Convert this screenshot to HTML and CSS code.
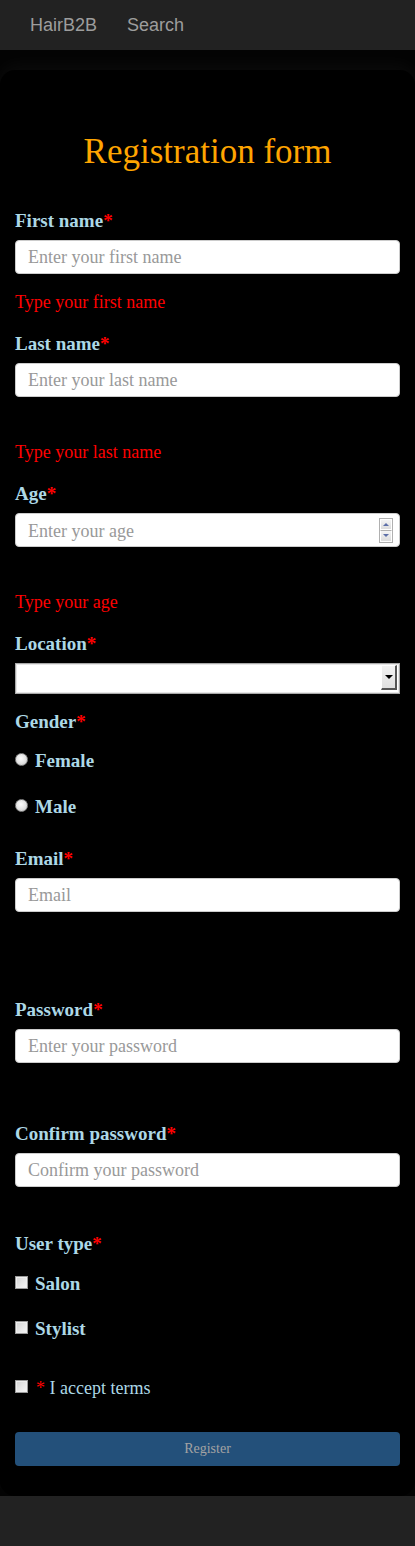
FILE: index.html
```html
<!DOCTYPE html>
<html lang="en">
<head>
<meta charset="utf-8">
<title>HairB2B - Registration</title>
<link rel="stylesheet" href="styles.css">
</head>
<body>
<nav class="navbar">
  <a class="brand" href="#">HairB2B</a>
  <a class="nav-link" href="#">Search</a>
</nav>
<main class="wrap">
  <form class="card">
    <h1 class="title">Registration form</h1>

    <div class="field f-first">
      <label class="lbl">First name<span class="req">*</span></label>
      <input class="ctl" type="text" placeholder="Enter your first name">
      <div class="err">Type your first name</div>
    </div>

    <div class="field f-std">
      <label class="lbl">Last name<span class="req">*</span></label>
      <input class="ctl" type="text" placeholder="Enter your last name">
      <div class="err err-far">Type your last name</div>
    </div>

    <div class="field f-std">
      <label class="lbl">Age<span class="req">*</span></label>
      <div class="numbox">
        <input class="num-input" type="text" placeholder="Enter your age">
        <div class="spin">
          <span class="spin-btn"><span class="tri-up"></span></span>
          <span class="spin-btn"><span class="tri-down"></span></span>
        </div>
      </div>
      <div class="err err-far">Type your age</div>
    </div>

    <div class="field f-std">
      <label class="lbl">Location<span class="req">*</span></label>
      <div class="selectbox">
        <select class="select-native"><option></option></select>
        <span class="select-btn"><span class="tri-black"></span></span>
      </div>
    </div>

    <div class="field f-gender">
      <label class="lbl lbl-group">Gender<span class="req">*</span></label>
      <label class="opt opt-first"><input class="radio" type="radio" name="g"><span>Female</span></label>
      <label class="opt opt-next"><input class="radio" type="radio" name="g"><span>Male</span></label>
    </div>

    <div class="field f-email">
      <label class="lbl">Email<span class="req">*</span></label>
      <input class="ctl" type="email" placeholder="Email">
    </div>

    <div class="field f-pass">
      <label class="lbl">Password<span class="req">*</span></label>
      <input class="ctl" type="password" placeholder="Enter your password">
    </div>

    <div class="field f-confirm">
      <label class="lbl">Confirm password<span class="req">*</span></label>
      <input class="ctl" type="password" placeholder="Confirm your password">
    </div>

    <div class="field f-usertype">
      <label class="lbl lbl-group">User type<span class="req">*</span></label>
      <label class="opt opt-first-check"><input class="check" type="checkbox"><span>Salon</span></label>
      <label class="opt opt-next2"><input class="check" type="checkbox"><span>Stylist</span></label>
    </div>

    <label class="terms"><input class="check" type="checkbox"><span><span class="req">*</span> I accept terms</span></label>

    <button class="btn" type="button">Register</button>
  </form>
</main>
<footer class="footer"></footer>
</body>
</html>
```
FILE: styles.css
```css
* { box-sizing: border-box; }
html, body { margin: 0; padding: 0; }
body {
  background: #030303;
  font-family: "Liberation Serif", "Times New Roman", serif;
  color: #add8e6;
}
.navbar {
  height: 50px;
  background: #222;
  display: flex;
  align-items: flex-start;
  padding: 0 15px;
}
.navbar a {
  font-family: "Liberation Sans", Arial, sans-serif;
  font-size: 18px;
  line-height: 20px;
  color: #9d9d9d;
  text-decoration: none;
  padding: 15px 15px;
}
.brand { margin-right: 0; }
.wrap {
  padding-top: 20px;
  background: #030303;
}
.card {
  display: block;
  background: #000;
  border-radius: 15px;
  padding: 62px 15px 30px;
  height: 1426px;
  box-shadow: 0 -6px 18px rgba(255,255,255,0.035);
}
.title {
  margin: 0;
  font-family: "Liberation Serif", "Times New Roman", serif;
  font-weight: 400;
  font-size: 35px;
  line-height: 40px;
  color: #ffa500;
  text-align: center;
}
.field { display: block; }
.f-first { margin-top: 38px; }
.f-std { margin-top: 21px; }
.f-gender { margin-top: 17px; }
.f-email { margin-top: 30px; }
.f-pass { margin-top: 87px; }
.f-confirm { margin-top: 60px; }
.f-usertype { margin-top: 46px; }
.lbl {
  display: block;
  font-weight: 700;
  font-size: 19px;
  line-height: 22px;
  color: #add8e6;
  margin-bottom: 8px;
}
.lbl-group { margin-bottom: 0; }
.req { color: #f00; }
.ctl {
  display: block;
  width: 100%;
  height: 34px;
  padding: 1px 12px 0;
  border: 1px solid #ccc;
  border-radius: 4px;
  background: #fff;
  font-family: "Liberation Serif", "Times New Roman", serif;
  font-size: 18px;
  color: #555;
  outline: none;
}
.ctl::placeholder, .num-input::placeholder { color: #999; opacity: 1; }
.err {
  margin-top: 18px;
  font-size: 18px;
  line-height: 20px;
  color: #f00;
}
.err-far { margin-top: 45px; }

.numbox {
  display: flex;
  align-items: center;
  height: 34px;
  border: 1px solid #ccc;
  border-radius: 4px;
  background: #fff;
  padding-right: 6px;
}
.num-input {
  flex: 1;
  min-width: 0;
  height: 100%;
  border: none;
  background: transparent;
  padding: 3px 12px 0;
  font-family: "Liberation Serif", "Times New Roman", serif;
  font-size: 18px;
  outline: none;
}
.spin {
  display: flex;
  flex-direction: column;
  width: 14px;
  height: 25px;
  border: 1px solid #b0b0b0;
  background: #fff;
}
.spin-btn {
  flex: 1;
  display: flex;
  align-items: center;
  justify-content: center;
  background: linear-gradient(#f4f4f4, #dcdcdc);
  border: 1px solid #fff;
}
.spin-btn + .spin-btn { border-top: 1px solid #b0b0b0; }
.tri-up {
  width: 0; height: 0;
  border-left: 3px solid transparent;
  border-right: 3px solid transparent;
  border-bottom: 3px solid #5d6fa8;
}
.tri-down {
  width: 0; height: 0;
  border-left: 3px solid transparent;
  border-right: 3px solid transparent;
  border-top: 3px solid #5d6fa8;
}

.selectbox {
  display: flex;
  align-items: stretch;
  height: 31px;
  border: 1px solid #a9a9a9;
  box-shadow: inset 0 0 0 1px #e6e6e6;
  background: #fff;
  padding: 1px 2px 3px 1px;
}
.select-native {
  flex: 1;
  min-width: 0;
  appearance: none;
  -webkit-appearance: none;
  border: none;
  background: transparent;
  outline: none;
  font-family: "Liberation Serif", "Times New Roman", serif;
  font-size: 16px;
}
.select-btn {
  width: 16px;
  display: flex;
  align-items: center;
  justify-content: center;
  background: linear-gradient(#f2f2f2, #e0e0e0);
  border-top: 1px solid #fff;
  border-left: 1px solid #fff;
  border-right: 2px solid #555;
  border-bottom: 2px solid #555;
}
.tri-black {
  width: 0; height: 0;
  border-left: 4px solid transparent;
  border-right: 4px solid transparent;
  border-top: 4px solid #000;
}

.opt, .terms {
  display: flex;
  align-items: flex-start;
  line-height: 22px;
}
.opt {
  font-weight: 700;
  font-size: 19px;
}
.opt-first { margin-top: 17px; }
.opt-first-check { margin-top: 18px; }
.opt-next { margin-top: 24px; }
.opt-next2 { margin-top: 23px; }
.terms {
  margin-top: 37px;
  font-size: 18px;
  font-weight: 400;
}
.radio {
  appearance: none;
  -webkit-appearance: none;
  width: 13px;
  height: 13px;
  margin: 3px 7px 0 0;
  border-radius: 50%;
  border: 1px solid #8a8a8a;
  background: radial-gradient(circle at 45% 40%, #fdfdfd 0%, #e2e2e2 55%, #bdbdbd 100%);
  flex: none;
}
.check {
  appearance: none;
  -webkit-appearance: none;
  width: 13px;
  height: 13px;
  margin: 3px 7px 0 0;
  border: 1px solid #9a9a9a;
  background: linear-gradient(135deg, #d4d4d4, #f7f7f7);
  box-shadow: inset 0 0 0 1px #eee;
  flex: none;
}
.terms .check { margin-right: 8px; }

.btn {
  display: block;
  width: 100%;
  height: 34px;
  margin-top: 33px;
  border: none;
  border-radius: 4px;
  background: #23507a;
  color: #a3a3a3;
  font-family: "Liberation Serif", "Times New Roman", serif;
  font-size: 14px;
}
.footer {
  height: 50px;
  background: #222;
}
```
